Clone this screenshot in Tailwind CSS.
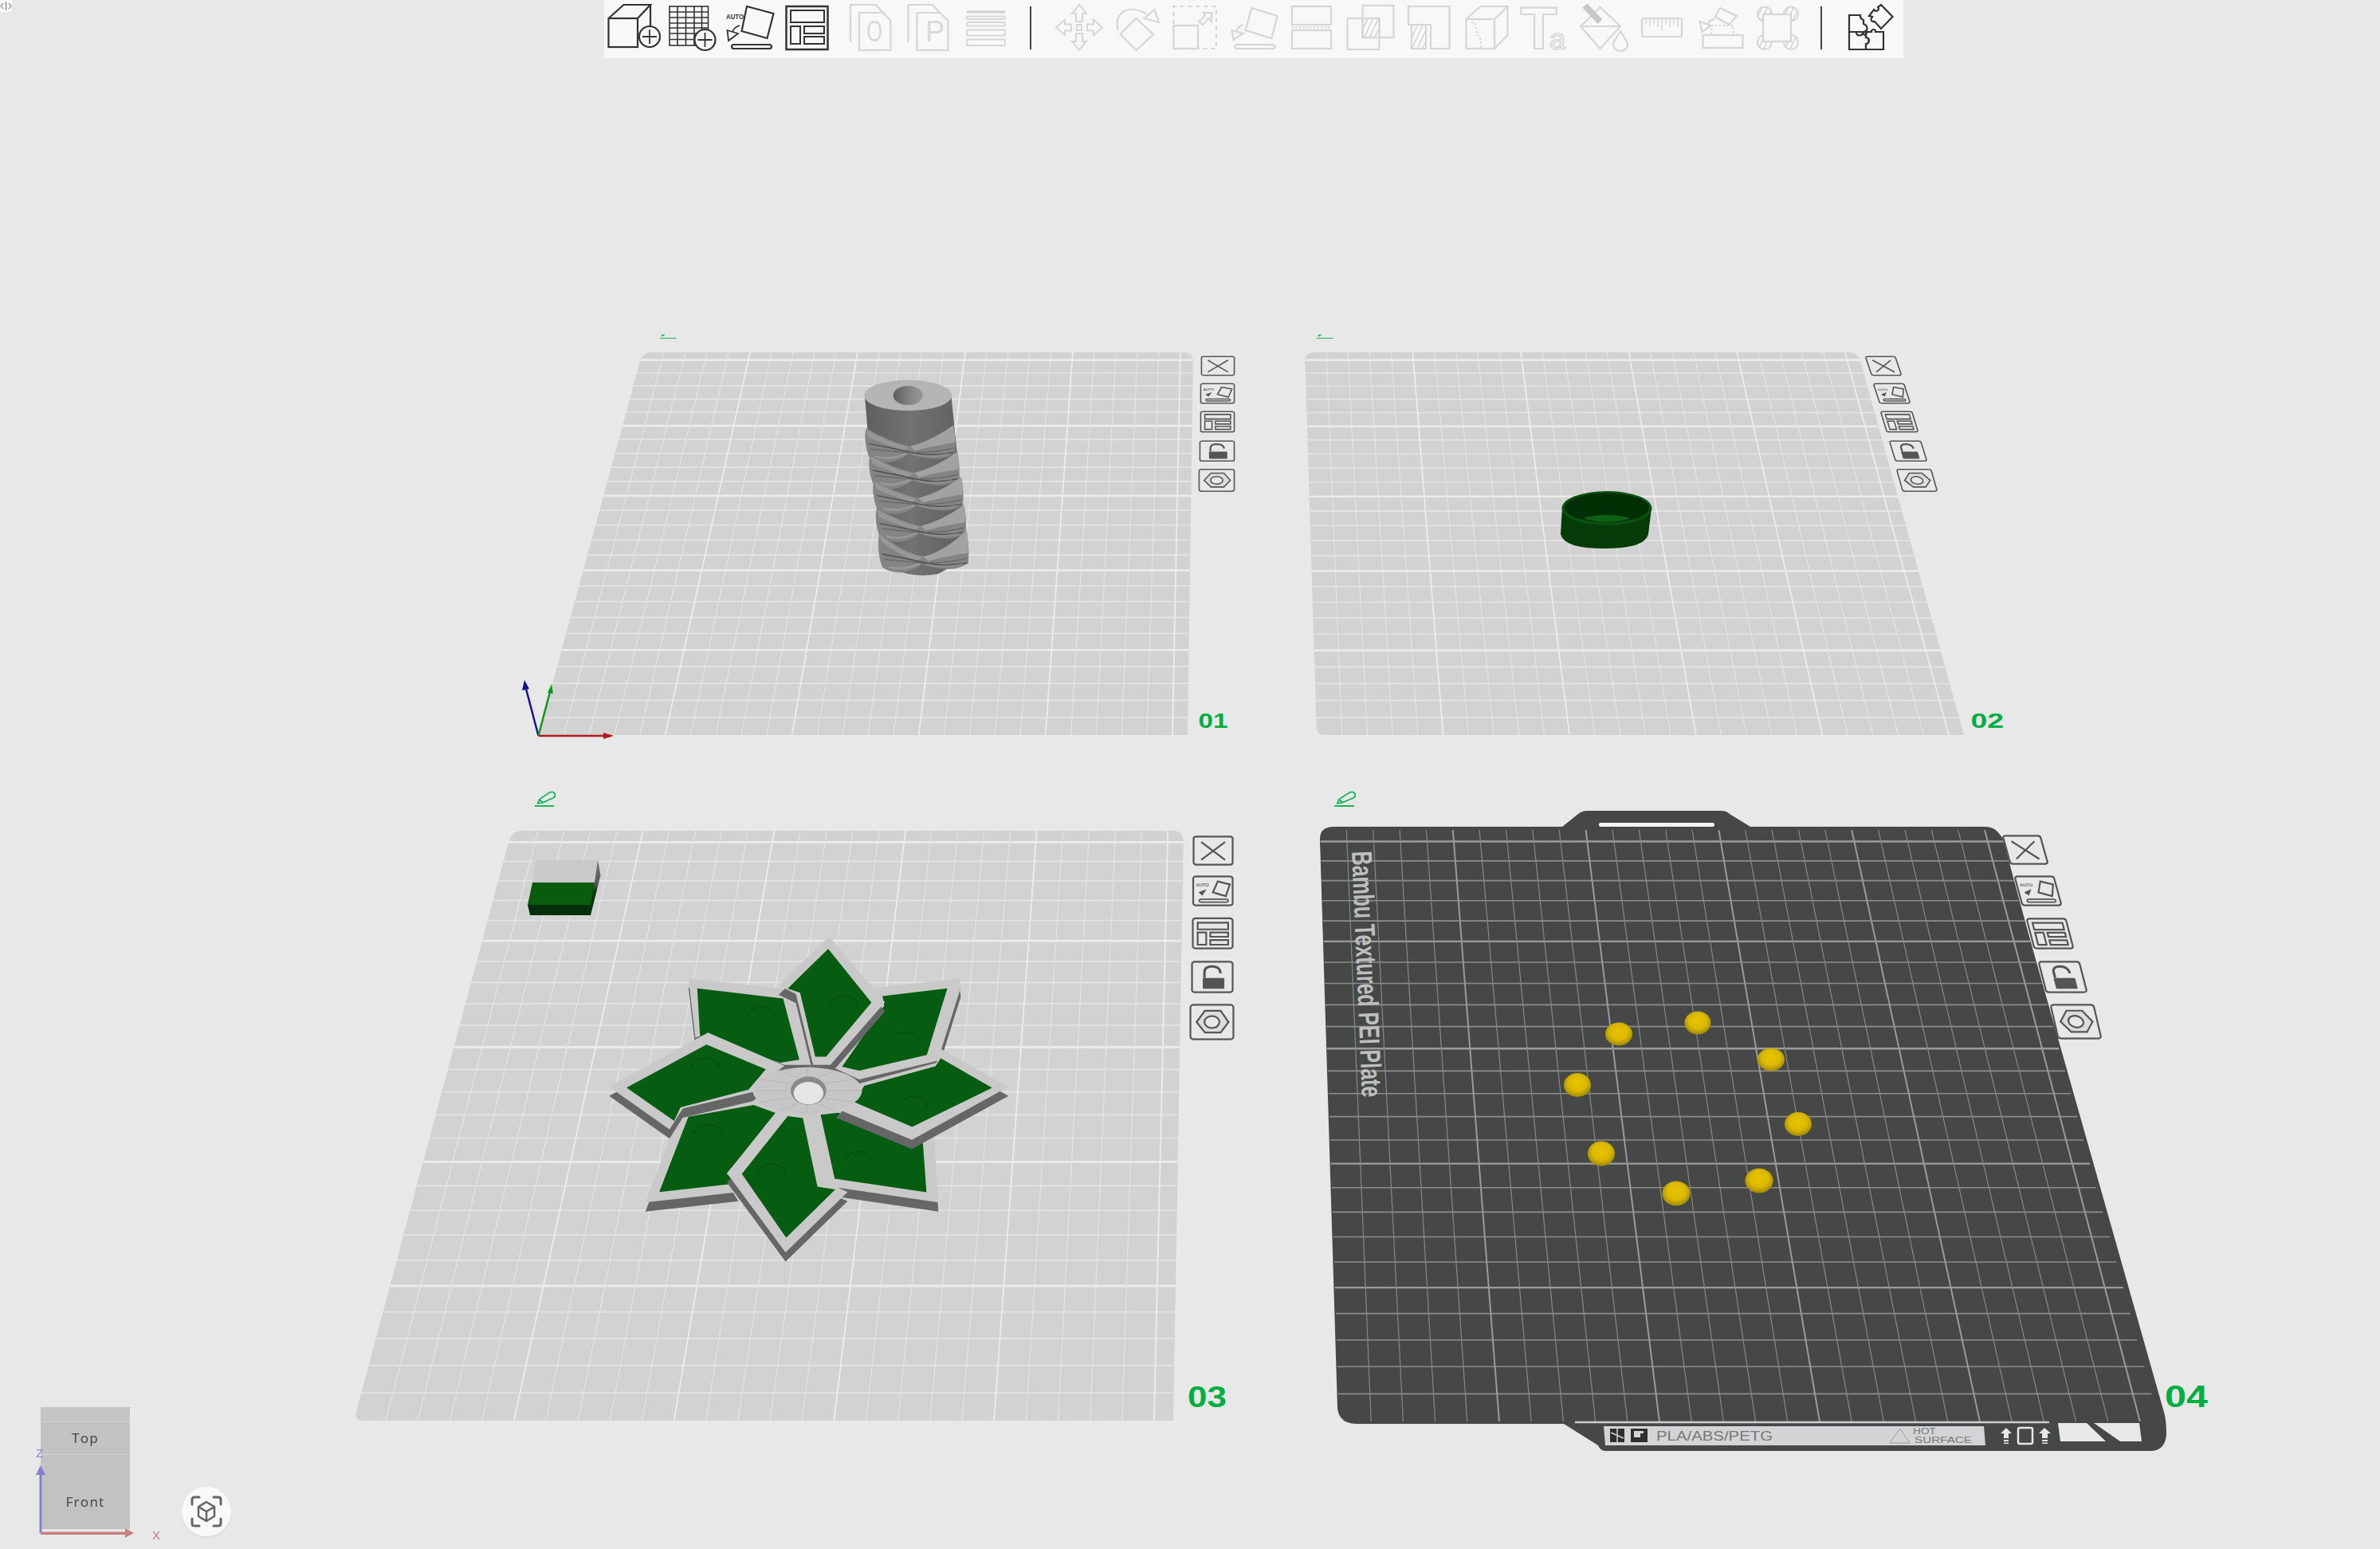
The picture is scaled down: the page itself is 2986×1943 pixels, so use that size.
<!doctype html>
<html lang="en">
<head>
<meta charset="utf-8">
<title>Plates</title>
<script src="https://cdn.jsdelivr.net/npm/@tailwindcss/browser@4"></script>
</head>
<body class="bg-[#e8e8e8] font-['Liberation_Sans',sans-serif]">
<div class="relative w-[2986px] h-[1943px] overflow-hidden bg-[#e8e8e8]">

  <!-- free 3D canvas -->
  <svg id="scene" class="absolute inset-0 w-[2986px] h-[1943px]" viewBox="0 0 2986 1943" xmlns="http://www.w3.org/2000/svg">
    <defs>
      <radialGradient id="bead" cx="50%" cy="42%" r="55%">
        <stop offset="0%" stop-color="#e6c400"/><stop offset="60%" stop-color="#dcb900"/><stop offset="100%" stop-color="#a88e00"/>
      </radialGradient>
      <linearGradient id="colBody" x1="0" x2="1" y1="0" y2="0">
        <stop offset="0%" stop-color="#5e5e5e"/><stop offset="45%" stop-color="#727272"/><stop offset="100%" stop-color="#5e5e5e"/>
      </linearGradient>
      <linearGradient id="holeGrad" x1="0" x2="1" y1="0" y2="0">
        <stop offset="0%" stop-color="#5f5f5f"/><stop offset="60%" stop-color="#868686"/><stop offset="100%" stop-color="#999999"/>
      </linearGradient>
      <linearGradient id="sideGrad" x1="0" x2="0" y1="0" y2="1">
        <stop offset="0%" stop-color="#777777"/><stop offset="45%" stop-color="#555555"/><stop offset="55%" stop-color="#053c08"/><stop offset="100%" stop-color="#032b05"/>
      </linearGradient>
      <pattern id="hatch" width="6" height="6" patternUnits="userSpaceOnUse" patternTransform="rotate(25)">
        <line x1="0" y1="0" x2="0" y2="6" stroke="#c4c4c4" stroke-width="2"/>
      </pattern>
    </defs>
    <g id="plates"></g>

    <!-- plate 4 label and details -->
    <text transform="translate(1696,1068) rotate(87.6)" textLength="309" lengthAdjust="spacingAndGlyphs" font-family="Liberation Sans" font-weight="700" font-size="36" fill="#bebebe">Bambu Textured PEI Plate</text>
    <g id="strip">
      <polygon points="2012,1789 2489,1789 2491,1813 2014,1813" fill="#d2d4d5"/>
      <rect x="2020" y="1792" width="18" height="17" fill="#2e2e2e"/>
      <path d="M2029 1792 V1809 M2021 1797 L2037 1804" stroke="#d2d4d5" stroke-width="1.5"/>
      <rect x="2046" y="1792" width="21" height="17" fill="#2e2e2e"/>
      <rect x="2050" y="1795" width="12" height="8" fill="#d2d4d5"/>
      <rect x="2058" y="1798" width="7" height="9" fill="#2e2e2e"/>
      <text x="2078" y="1807" textLength="146" lengthAdjust="spacingAndGlyphs" font-family="Liberation Sans" font-size="16" fill="#777777">PLA/ABS/PETG</text>
      <polygon points="2383.5,1792 2371,1810 2396,1810" fill="none" stroke="#9a9a9a" stroke-width="1"/>
      <text x="2400" y="1799" textLength="29" lengthAdjust="spacingAndGlyphs" font-family="Liberation Sans" font-size="10" fill="#777777">HOT</text>
      <text x="2402" y="1810" textLength="72" lengthAdjust="spacingAndGlyphs" font-family="Liberation Sans" font-size="10" fill="#777777">SURFACE</text>
      <path d="M2517 1791 L2524 1798 H2520 V1804 H2514 V1798 H2510 Z M2514 1806 H2520 V1808 H2514 Z M2514 1809.5 H2520 V1811 H2514 Z" fill="#e8e8e8"/>
      <rect x="2532" y="1791" width="18" height="20" rx="2" fill="none" stroke="#e8e8e8" stroke-width="2.5"/>
      <path d="M2565 1791 L2573 1798 H2569 V1804 H2562 V1798 H2558 Z M2562 1806 H2569 V1808 H2562 Z M2562 1809.5 H2569 V1811 H2562 Z" fill="#e8e8e8"/>
      <polygon points="2582,1785 2618,1785 2642,1808 2585,1808" fill="#e8e8e8"/>
      <polygon points="2627,1785 2684,1785 2687,1808 2660,1808" fill="#e8e8e8"/>
    </g>

    <!-- column on plate 1 -->
    <g id="column" transform="translate(1060,460) scale(0.3333)"></g>

    <!-- cup on plate 2 -->
    <g>
      <path d="M1960 637 L1958 670 Q1962 688 2013 688 Q2064 688 2068 670 L2072 637 Z" fill="#043b07"/>
      <ellipse cx="2016" cy="637.5" rx="56.5" ry="21.5" fill="#0a5010"/>
      <ellipse cx="2016" cy="637" rx="53" ry="18.5" fill="#032f05"/>
      <path d="M1986 650 Q2015 642 2046 650 Q2016 660 1986 650 Z" fill="#0b6213"/>
    </g>

    <!-- two-tone cube on plate 3 -->
    <g>
      <polygon points="750,1079 753.5,1098 741,1148 737,1107" fill="url(#sideGrad)"/>
      <polygon points="672,1079 750,1079 746,1107 668,1107" fill="#c9c9c9"/>
      <polygon points="668,1107 746,1107 741,1135 662,1135" fill="#0a5b0e"/>
      <polygon points="662,1135 741,1135 741,1148 665,1148" fill="#03300a"/>
    </g>

    <!-- star on plate 3 -->
    <g id="flower" transform="translate(440,980) scale(0.7207,0.523)"></g>

    <!-- pins on plate 4 -->
    <g fill="url(#bead)">
      <ellipse cx="2031" cy="1297" rx="17" ry="14.5"/>
      <ellipse cx="2130" cy="1283" rx="16.5" ry="14.5"/>
      <ellipse cx="2222" cy="1329" rx="17" ry="14.5"/>
      <ellipse cx="2256" cy="1410" rx="17" ry="15"/>
      <ellipse cx="2207" cy="1481" rx="17.5" ry="15.5"/>
      <ellipse cx="2103" cy="1497" rx="17.5" ry="15.5"/>
      <ellipse cx="2009" cy="1447" rx="17" ry="15.5"/>
      <ellipse cx="1979" cy="1361" rx="17" ry="15"/>
    </g>

    <!-- world axes -->
    <g stroke-width="2.5" fill="none">
      <line x1="675.5" y1="923" x2="660" y2="864" stroke="#14148c"/>
      <line x1="675.5" y1="923" x2="690" y2="868" stroke="#14961e"/>
      <line x1="675.5" y1="923" x2="760" y2="923" stroke="#b01a1a"/>
    </g>
    <polygon points="658,853 655,866 664,864" fill="#14148c"/>
    <polygon points="692,858 687,869 694,870" fill="#14961e"/>
    <polygon points="770,923 757,919 757,927" fill="#b01a1a"/>

    <!-- plate numbers -->
    <g font-family="Liberation Sans" font-weight="700" fill="#00ae42">
      <text x="1503.5" y="913" font-size="25" textLength="37" lengthAdjust="spacingAndGlyphs">01</text>
      <text x="2472.5" y="913" font-size="25" textLength="41.5" lengthAdjust="spacingAndGlyphs">02</text>
      <text x="1490" y="1765" font-size="37" textLength="49" lengthAdjust="spacingAndGlyphs">03</text>
      <text x="2716" y="1765" font-size="38" textLength="54" lengthAdjust="spacingAndGlyphs">04</text>
    </g>
    <g id="sides"></g>
    <g id="pencils"></g>
  </svg>

  <!-- top-left handle -->
  <div class="absolute left-0 top-0 w-[15px] h-[15px] bg-[#f8f8f8] flex items-center justify-center">
    <svg class="w-[15px] h-[15px]" viewBox="0 0 15 15"><path d="M4 4 L1 7.5 L4 11 M11 4 L14 7.5 L11 11" fill="none" stroke="#555" stroke-width="1"/><line x1="7.5" y1="2" x2="7.5" y2="13" stroke="#999" stroke-width="1.5"/></svg>
  </div>

  <!-- toolbar -->
  <div class="absolute left-[758px] top-0 w-[1630px] h-[73px] bg-[#f8f8f8] flex items-start pl-[2px]">
    <svg class="w-[72.5px] h-[73px] shrink-0" viewBox="0 0 72.5 73" fill="none" stroke="#333" stroke-width="2.2">
      <rect x="3.5" y="23" width="36.5" height="36"/><path d="M3.5 23 L22.5 6 H56 L40 23 M56 6 V34"/>
      <circle cx="55" cy="46" r="13" fill="#f8f8f8"/><path d="M55 37 V55 M46 46 H64" stroke-width="1.8"/>
    </svg>
    <svg class="w-[72.5px] h-[73px] shrink-0" viewBox="0 0 72.5 73" fill="none" stroke="#333" stroke-width="1.6">
      <rect x="7" y="8" width="48.5" height="49"/><path d="M17 8 V57 M27.5 8 V57 M38 8 V57 M47.5 8 V57 M7 15 H55.5 M7 22 H55.5 M7 29 H55.5 M7 35 H55.5 M7 42 H55.5 M7 49.5 H55.5"/>
      <circle cx="51.5" cy="50" r="13" fill="#f8f8f8" stroke-width="2.2"/><path d="M51.5 41 V59 M42.5 50 H60.5" stroke-width="1.8"/>
    </svg>
    <svg class="w-[72.5px] h-[73px] shrink-0" viewBox="0 0 72.5 73" fill="none" stroke="#333" stroke-width="2.2">
      <polygon points="32,8 65.5,17 57.5,48 25.5,39"/>
      <rect x="13" y="56" width="50" height="5" rx="2.5"/>
      <path d="M23 32 Q16 34 14 40" stroke-width="1.8"/>
      <polygon points="7.5,38 21,42 9,51" stroke-width="1.8"/>
      <text x="6" y="24" font-family="Liberation Sans" font-weight="700" font-size="9" fill="#333" stroke="none" textLength="22" lengthAdjust="spacingAndGlyphs">AUTO</text>
    </svg>
    <svg class="w-[72.5px] h-[73px] shrink-0" viewBox="0 0 72.5 73" fill="none" stroke="#333" stroke-width="2">
      <rect x="8.5" y="8" width="52" height="54" stroke-width="2.5"/><rect x="14" y="13" width="42" height="15"/><rect x="14" y="33" width="12" height="22"/><rect x="31" y="33" width="25" height="9"/><rect x="31" y="46" width="25" height="9"/>
    </svg>
    <svg class="w-[72.5px] h-[73px] shrink-0" viewBox="0 0 72.5 73" fill="none" stroke="#d6d6d6" stroke-width="2.2">
      <path d="M17 53 V6 H49 L58 16"/>
      <path d="M28 16 H58 L67.5 26 V63 H28 Z" fill="#f8f8f8"/>
      <text x="37" y="52" font-family="Liberation Sans" font-size="36" fill="#d9d9d9" stroke="none" textLength="20" lengthAdjust="spacingAndGlyphs">O</text>
    </svg>
    <svg class="w-[72.5px] h-[73px] shrink-0" viewBox="0 0 72.5 73" fill="none" stroke="#d6d6d6" stroke-width="2.2">
      <path d="M16.5 53 V6 H47 L56 16"/>
      <path d="M27.5 16 H56 L66.5 26 V63 H27.5 Z" fill="#f8f8f8"/>
      <text x="38" y="52" font-family="Liberation Sans" font-size="36" fill="#d9d9d9" stroke="none">P</text>
    </svg>
    <svg class="w-[72.5px] h-[73px] shrink-0" viewBox="0 0 72.5 73" fill="none" stroke="#d6d6d6" stroke-width="1.8">
      <rect x="18" y="13.5" width="48" height="3" fill="#d0d0d0" stroke="none"/><rect x="18" y="20.5" width="48" height="3.5" rx="1"/><rect x="18" y="28" width="48" height="4.5" rx="1"/><rect x="18" y="37.5" width="48" height="7" rx="1"/><rect x="18" y="49.5" width="48" height="7.5" rx="1"/>
    </svg>
    <div class="w-[50px] h-[73px] shrink-0 flex justify-center pt-[8px]"><div class="w-[2px] h-[54px] bg-[#444]"></div></div>

    <svg class="w-[72.5px] h-[73px] shrink-0" viewBox="0 0 72.5 73" fill="none" stroke="#d6d6d6" stroke-width="2">
      <path d="M36 6 L45 17 H40 V27 H32 V17 H27 Z"/><path d="M36 63 L45 52 H40 V42 H32 V52 H27 Z"/>
      <path d="M7 34.5 L18 25 V30.5 H26 V38.5 H18 V44 Z"/><path d="M65 34.5 L54 25 V30.5 H46 V38.5 H54 V44 Z"/><rect x="33" y="31" width="6" height="7"/>
    </svg>
    <svg class="w-[72.5px] h-[73px] shrink-0" viewBox="0 0 72.5 73" fill="none" stroke="#d6d6d6" stroke-width="2.2">
      <polygon points="35.5,23 57,43 35.5,63 15.5,43"/>
      <path d="M13 38 C6 18 24 4 48 17"/><polygon points="58.5,12 64,28 45.5,23"/>
    </svg>
    <svg class="w-[72.5px] h-[73px] shrink-0" viewBox="0 0 72.5 73" fill="none" stroke="#d6d6d6" stroke-width="2.2">
      <rect x="9.5" y="32" width="30.5" height="29"/><path d="M9.5 30 V8 H63 V61 H41" stroke-dasharray="5 5"/>
      <path d="M47 16 H57 V27 L53 23 L46 31 L41 27 L49 20 Z"/>
    </svg>
    <svg class="w-[72.5px] h-[73px] shrink-0" viewBox="0 0 72.5 73" fill="none" stroke="#d6d6d6" stroke-width="2.2">
      <polygon points="35.5,10 67.5,20 60.5,48 27.5,38"/><rect x="14.5" y="56" width="50" height="5" rx="2.5"/>
      <path d="M25 31 Q18 33 17 38"/><polygon points="10.5,38 24.5,42 12.5,50"/>
    </svg>
    <svg class="w-[72.5px] h-[73px] shrink-0" viewBox="0 0 72.5 73" fill="none" stroke="#d6d6d6" stroke-width="2.2">
      <rect x="13" y="8" width="49" height="23"/><rect x="13" y="38" width="49" height="23"/><path d="M13 34.5 H62" stroke-dasharray="2.5 2" stroke-width="2"/>
    </svg>
    <svg class="w-[72.5px] h-[73px] shrink-0" viewBox="0 0 72.5 73" fill="none" stroke="#d6d6d6" stroke-width="2.2">
      <rect x="29.5" y="23" width="21" height="24" fill="url(#hatch)"/><rect x="29.5" y="7" width="39" height="40"/><rect x="10.5" y="23" width="40" height="39"/>
    </svg>
    <svg class="w-[72.5px] h-[73px] shrink-0" viewBox="0 0 72.5 73" fill="none" stroke="#d6d6d6" stroke-width="2.2">
      <path d="M14 8 H65.5 V61 H42 V31 H14 Z"/><rect x="18" y="31" width="18" height="30" fill="url(#hatch)"/>
    </svg>
    <svg class="w-[72.5px] h-[73px] shrink-0" viewBox="0 0 72.5 73" fill="none" stroke="#d6d6d6" stroke-width="2.2">
      <rect x="14.5" y="24" width="35.5" height="37"/><path d="M14.5 24 L32.5 8 H66.5 V44 L50 61 M50 24 L66.5 8"/>
      <path d="M21 28 H25 L28 42 L33 50 V60" stroke-width="1.8" stroke-dasharray="2.5 2.5"/>
    </svg>
    <svg class="w-[72.5px] h-[73px] shrink-0" viewBox="0 0 72.5 73" fill="none" stroke="#d6d6d6" stroke-width="2.2">
      <text x="9.5" y="61" font-family="Liberation Sans" font-weight="700" font-size="74" textLength="46" lengthAdjust="spacingAndGlyphs" fill="#f8f8f8">T</text>
      <text x="46" y="62" font-family="Liberation Sans" font-size="36" textLength="20" lengthAdjust="spacingAndGlyphs" fill="#f8f8f8" stroke-width="1.6">a</text>
    </svg>
    <svg class="w-[72.5px] h-[73px] shrink-0" viewBox="0 0 72.5 73" fill="none" stroke="#d6d6d6" stroke-width="2.2">
      <polygon points="37.5,9 63,33 37.5,61 13,33"/><path d="M13 33 H63"/>
      <path d="M18.5 7 L37.5 27" stroke="#c6c6c6" stroke-width="8"/>
      <path d="M63 39 C58 48 54 52 54 56 A9 8 0 0 0 72 56 C72 52 68 48 63 39 Z" fill="#f8f8f8"/>
    </svg>
    <svg class="w-[72.5px] h-[73px] shrink-0" viewBox="0 0 72.5 73" fill="none" stroke="#d6d6d6" stroke-width="2.2">
      <rect x="17" y="23" width="50" height="23" rx="1.5"/><path d="M22 24 V31 M27 24 V34 M32 24 V31 M37 24 V34 M42 24 V38 M47 24 V31 M52 24 V34 M57 24 V31 M62 24 V34" stroke-width="1.5"/>
    </svg>
    <svg class="w-[72.5px] h-[73px] shrink-0" viewBox="0 0 72.5 73" fill="none" stroke="#d6d6d6" stroke-width="2.2">
      <rect x="21.5" y="44" width="50" height="16"/><path d="M32.5 43 V32 H59.5 V43" stroke-dasharray="2.5 2.5"/>
      <polygon points="43,10 63.5,20 54.5,31 36.5,21"/>
      <path d="M36 24 Q30 25 27 30"/><polygon points="17.5,27 31.5,32 20.5,40"/>
    </svg>
    <svg class="w-[72.5px] h-[73px] shrink-0" viewBox="0 0 72.5 73" fill="none" stroke="#d6d6d6" stroke-width="2">
      <circle cx="26" cy="17.5" r="9" fill="url(#hatch)"/><circle cx="59" cy="17.5" r="9" fill="url(#hatch)"/><circle cx="26" cy="53" r="9" fill="url(#hatch)"/><circle cx="59" cy="53" r="9" fill="url(#hatch)"/>
      <rect x="24" y="18" width="35" height="34" fill="#f8f8f8" stroke-width="2.2"/>
    </svg>
    <div class="w-[50px] h-[73px] shrink-0 flex justify-center pt-[8px]"><div class="w-[2px] h-[54px] bg-[#444]"></div></div>
    <svg class="w-[72.5px] h-[73px] shrink-0" viewBox="0 0 72.5 73" fill="none" stroke="#333" stroke-width="2.2">
      <path d="M10 19 H24 C23 24 28 25 28 24 V30 C34 32 34 39 28 40 C26 44 32 46 32 40 H10 Z"/>
      <path d="M10 40 H19 C18 46 28 46 27 40 H31 V47 C36 47 36 55 31 55 V62 H10 Z"/>
      <path d="M31 40 H38 C37 36 44 36 43 40 H53 V62 H31 V55 C36 55 36 47 31 47 Z"/>
      <path d="M50 6 L64.5 21 L50 36 L42 27 C37 28 36 22 40 21 L35 20 L41 12 C44 16 49 12 46 9 Z"/>
    </svg>
  </div>

  <!-- view cube -->
  <div class="absolute left-[51px] top-[1765px] w-[112px] h-[153px] bg-[#c2c2c2] flex flex-col text-[#444] font-['Open_Sans',sans-serif] text-[17px] tracking-[1.3px]">
    <div class="h-[19px] shrink-0 border-b border-[#d2d2d2] bg-[#c5c5c5]"></div>
    <div class="h-[41px] shrink-0 border-b border-[#cecece] flex items-center justify-center">Top</div>
    <div class="flex-1 flex items-center justify-center pt-[24px]">Front</div>
  </div>

  <!-- gizmo axes over view cube -->
  <svg class="absolute left-[40px] top-[1810px] w-[170px] h-[130px]" viewBox="40 1810 170 130">
    <rect x="49.5" y="1848" width="3" height="75" fill="#8383cc"/>
    <polygon points="51,1838 45,1850 57,1850" fill="#8383cc"/>
    <rect x="51" y="1921.5" width="106" height="3.5" fill="#cb8080"/>
    <polygon points="168,1923 157,1917 157,1929" fill="#cb8080"/>
    <text x="45" y="1828" font-family="Liberation Sans" font-size="15" fill="#8a8ad0">Z</text>
    <text x="191" y="1931" font-family="Liberation Sans" font-size="15" fill="#cc8080">X</text>
  </svg>

  <!-- fit button -->
  <div class="absolute left-[228px] top-[1865px] w-[62px] h-[62px] rounded-full bg-[#f9f9f9] shadow-[0_2px_3px_rgba(0,0,0,0.06)] flex items-center justify-center">
    <svg class="w-[40px] h-[40px]" viewBox="0 0 40 40" fill="none" stroke="#666" stroke-width="3" stroke-linecap="round" stroke-linejoin="round">
      <path d="M2 11 V5 Q2 2 5 2 H11 M29 2 H35 Q38 2 38 5 V11 M38 29 V35 Q38 38 35 38 H29 M11 38 H5 Q2 38 2 35 V29"/>
      <path d="M20 8 L30 14 V26 L20 32 L10 26 V14 Z M10 14 L20 20 L30 14 M20 20 V32" stroke-width="2.5"/>
    </svg>
  </div>
</div>

<script>
function homography(q){
  const [x0,y0]=q[0],[x1,y1]=q[1],[x2,y2]=q[2],[x3,y3]=q[3];
  const dx1=x1-x2,dx2=x3-x2,sx=x0-x1+x2-x3,dy1=y1-y2,dy2=y3-y2,sy=y0-y1+y2-y3;
  const den=dx1*dy2-dx2*dy1,g=(sx*dy2-dx2*sy)/den,h=(dx1*sy-sx*dy1)/den;
  const a=x1-x0+g*x1,b=x3-x0+h*x3,d=y1-y0+g*y1,e=y3-y0+h*y3;
  return (u,v)=>{const w=g*u+h*v+1;return [(a*u+b*v+x0)/w,(d*u+e*v+y0)/w];};
}
function roundedQuad(q,rs){
  let out='';
  for(let i=0;i<4;i++){
    const p=q[i],a=q[(i+3)%4],b=q[(i+1)%4],r=rs[i];
    const la=Math.hypot(a[0]-p[0],a[1]-p[1]),lb=Math.hypot(b[0]-p[0],b[1]-p[1]);
    const s=[p[0]+(a[0]-p[0])*r/la,p[1]+(a[1]-p[1])*r/la],t=[p[0]+(b[0]-p[0])*r/lb,p[1]+(b[1]-p[1])*r/lb];
    out+=(i?'L':'M')+s[0].toFixed(1)+' '+s[1].toFixed(1)+' Q'+p[0]+' '+p[1]+' '+t[0].toFixed(1)+' '+t[1].toFixed(1)+' ';
  }
  return out+'Z';
}
function grid(id,q,fill,h1,h2,v1,v2,w,rs){
  const H=homography(q);let s='';
  const path=roundedQuad(q,rs);
  s+='<clipPath id="clip'+id+'"><path d="'+path+'"/></clipPath>';
  s+='<path d="'+path+'" fill="'+fill+'"/><g clip-path="url(#clip'+id+')" fill="none">';
  for(let k=1;k<=25;k++){
    const bold=k%5===0;
    const a=H(0,1-k*10/256),b=H(1,1-k*10/256);
    s+='<line x1="'+a[0]+'" y1="'+a[1]+'" x2="'+b[0]+'" y2="'+b[1]+'" stroke="'+(bold?h2:h1)+'" stroke-width="'+(bold?w[1]:w[0])+'"/>';
  }
  for(let k=1;k<=25;k++){
    const bold=k%5===0;
    const a=H(k*10/256,0),b=H(k*10/256,1);
    s+='<line x1="'+a[0]+'" y1="'+a[1]+'" x2="'+b[0]+'" y2="'+b[1]+'" stroke="'+(bold?v2:v1)+'" stroke-width="'+(bold?w[3]:w[2])+'"/>';
  }
  s+='</g>';
  return s;
}
const body4='<path d="M1656 1052 Q1656 1037 1674 1037 H1960 L1980 1021 Q1985 1017 1992 1017 H2160 Q2166 1017 2170 1021 L2196 1037 H2490 Q2506 1037 2511 1052 L2716 1775 Q2718 1785 2718 1800 Q2716 1820 2698 1820 H2014 Q2008 1820 2005 1813 L1962 1786 H1702 Q1680 1786 1678 1766 Z" fill="#464847"/>'+
 '<rect x="2006" y="1032" width="145" height="5" rx="2" fill="#f2f2f2"/>';
let plates='';
const lw=[1.8,2.6,1.2,1.8];
plates+=grid(1,[[806,442],[1497,442],[1490,922],[675.5,922]],'#d2d2d2','#e2e2e2','#ebebeb','#e4e4e4','#ececec',lw,[12,12,0,6]);
plates+=grid(2,[[1637,442],[2331,442],[2464,922],[1652,922]],'#d2d2d2','#e2e2e2','#ebebeb','#e4e4e4','#ececec',lw,[12,12,0,10]);
plates+=grid(3,[[642,1042],[1485,1042],[1472,1782],[444,1782]],'#d2d2d2','#e2e2e2','#ebebeb','#e4e4e4','#ececec',[1.8,2.8,1.2,1.8],[14,14,0,12]);
plates+=body4+grid(4,[[1656,1041],[2510,1041],[2709,1783],[1680,1783]],'#464847','#8c8c8c','#9c9c9c','#888888','#9a9a9a',[1.6,2.4,1.2,2],[16,16,0,18]);
plates+='<line x1="1976" y1="1784" x2="2571" y2="1784" stroke="#cfcfcf" stroke-width="2.5"/>';
document.getElementById('plates').innerHTML=plates;

/* column */
let col='';
col+='<path d="M75 110 L85 230 L145 740 Q235 800 350 780 L462 720 L400 105 Z" fill="url(#colBody)"/>';
const cross=[[240,320],[255,420],[270,515],[280,620],[290,735]];
cross.forEach(([x,y],i)=>{
  const scale=i===4?1.05:.85;
  const L=x-160,R=x+168,T=y-105*scale;
  /* silhouette of the crossing bands */
  col+='<path d="M'+L+' '+T+' Q'+(x-80)+' '+(y-42)+' '+(x+5)+' '+(y-20)+' Q'+(x+90)+' '+(y-42)+' '+R+' '+(T-12)+' Q'+(x+180)+' '+(y-50)+' '+(x+174)+' '+(y+6)+' Q'+(x+130)+' '+(y+30)+' '+(x+90)+' '+(y+26)+' Q'+(x+40)+' '+(y+22)+' '+x+' '+(y+8)+' Q'+(x-40)+' '+(y+38)+' '+(x-80)+' '+(y+40)+' Q'+(x-130)+' '+(y+38)+' '+(x-150)+' '+(y+18)+' Q'+(x-172)+' '+(y-45)+' '+L+' '+T+' Z" fill="#848484"/>';
  /* lit upper V */
  col+='<path d="M'+(x+6)+' '+(y-20)+' Q'+(x+90)+' '+(y-42)+' '+R+' '+(T-10)+' Q'+(x+178)+' '+(y-60)+' '+(x+172)+' '+(y-34)+' Q'+(x+90)+' '+(y-22)+' '+(x+25)+' '+(y-4)+' Z" fill="#a2a2a2"/>';
  col+='<path d="M'+(L+2)+' '+(T+6)+' Q'+(x-80)+' '+(y-36)+' '+(x+4)+' '+(y-18)+' L'+(x-18)+' '+(y-6)+' Q'+(x-90)+' '+(y-26)+' '+(L+8)+' '+(T+34)+' Z" fill="#979797"/>';
  /* folds running through the crossing */
  col+='<path d="M'+(x-150)+' '+(y-30)+' Q'+(x-70)+' '+(y-16)+' '+x+' '+y+' Q'+(x+90)+' '+(y+22)+' '+(x+170)+' '+(y+2)+'" fill="none" stroke="#4e4e4e" stroke-width="4"/>';
  col+='<path d="M'+(x-142)+' '+(y-10)+' Q'+(x-60)+' '+(y-2)+' '+(x+5)+' '+(y+4)+' M'+(x+30)+' '+(y+2)+' Q'+(x+100)+' '+(y+4)+' '+(x+168)+' '+(y-14)+'" fill="none" stroke="#5e5e5e" stroke-width="3"/>';
  /* lower lobes */
  col+='<path d="M'+(x-125)+' '+(y+18)+' Q'+(x-70)+' '+(y+34)+' '+(x-8)+' '+(y+6)+'" fill="none" stroke="#989898" stroke-width="8"/>';
  col+='<path d="M'+(x+18)+' '+(y+10)+' Q'+(x+80)+' '+(y+24)+' '+(x+150)+' '+(y+10)+'" fill="none" stroke="#8f8f8f" stroke-width="6"/>';
});
col+='<ellipse cx="238" cy="108" rx="165" ry="58" fill="#b5b5b5"/>';
col+='<ellipse cx="238" cy="108" rx="56" ry="36" fill="url(#holeGrad)"/>';
document.getElementById('column').innerHTML=col;

/* flower */
const petals=[
 {o:[[915,495],[1060,473],[1062,495],[1022,670],[885,715],[830,680]],g:[[925,510],[1045,490],[1007,660],[882,700],[850,690],[928,535]],m:[965,625]},
 {o:[[588,473],[770,500],[805,680],[755,680],[622,603],[600,615]],g:[[598,490],[757,516],[787,672],[752,680],[622,622],[603,610]],m:[715,565]},
 {o:[[795,795],[840,780],[975,860],[1015,840],[1023,1010],[825,970]],g:[[812,795],[845,790],[975,868],[1000,840],[1008,993],[838,958]],m:[883,912]},
 {o:[[575,785],[710,750],[765,790],[655,940],[675,985],[513,1010]],g:[[584,800],[705,770],[745,790],[655,945],[672,970],[530,992]],m:[622,848]},
 {o:[[833,372],[930,530],[835,680],[805,680],[775,510],[745,490]],g:[[832,393],[912,530],[828,668],[808,668],[780,505],[757,494]],m:[858,538]},
 {o:[[1025,640],[1145,733],[977,860],[845,785],[885,725],[1020,675]],g:[[1030,660],[1125,735],[977,835],[870,772],[888,730],[1020,680]],m:[980,780]},
 {o:[[655,940],[750,790],[795,795],[825,960],[865,985],[757,1130]],g:[[675,942],[760,795],[788,800],[815,975],[848,982],[757,1105]],m:[733,942]},
 {o:[[450,733],[622,603],[755,682],[700,745],[578,785],[555,835]],g:[[472,735],[620,625],[730,688],[698,740],[572,785],[560,820]],m:[617,688]}
];
const pts=a=>a.map(p=>p.join(',')).join(' ');
function inset(a,f){
  const cx=a.reduce((s,p)=>s+p[0],0)/a.length,cy=a.reduce((s,p)=>s+p[1],0)/a.length;
  return a.map(([x,y])=>[cx+(x-cx)*f,cy+(y-cy)*f]);
}
let fl='';
petals.forEach(p=>{
  const w=p.o.map(([x,y])=>[x,y+22]);
  fl+='<polygon points="'+pts(w)+'" fill="#666666"/>';
  fl+='<polygon points="'+pts(p.o)+'" fill="#c9c9c9"/>';
  fl+='<polygon points="'+pts(inset(p.g,.94))+'" fill="#065c10"/>';
  fl+='<path d="M'+(p.m[0]-24)+' '+p.m[1]+' A24 24 0 0 1 '+(p.m[0]+24)+' '+p.m[1]+'" fill="none" stroke="#044208" stroke-width="1.2"/>';
});
fl+='<ellipse cx="795" cy="742" rx="95" ry="56" fill="#c6c6c6"/>';
for(let i=0;i<12;i++){const a=i*Math.PI/6;fl+='<line x1="'+(795+35*Math.cos(a))+'" y1="'+(742+36*Math.sin(a))+'" x2="'+(795+93*Math.cos(a))+'" y2="'+(742+54*Math.sin(a))+'" stroke="#adadad" stroke-width="1"/>';}
fl+='<ellipse cx="797" cy="742" rx="31" ry="34" fill="#8a8a8a"/><ellipse cx="797" cy="748" rx="26" ry="27" fill="#e6e6e6"/>';
document.getElementById('flower').innerHTML=fl;

/* panel icons */
const ve='vector-effect="non-scaling-stroke"';
const shapes={
 x:sw=>'<line x1="20" y1="20" x2="80" y2="82" '+ve+' stroke="#555" stroke-width="'+sw+'"/><line x1="80" y1="20" x2="20" y2="82" '+ve+' stroke="#555" stroke-width="'+sw+'"/>',
 auto:sw=>'<polygon points="62,18 92,28 82,68 50,55" fill="none" '+ve+' stroke="#555" stroke-width="'+sw+'"/><rect x="16" y="78" width="72" height="10" rx="5" fill="none" '+ve+' stroke="#555" stroke-width="'+(sw*.8)+'"/><text x="8" y="36" font-family="Liberation Sans" font-weight="700" font-size="15" textLength="32" lengthAdjust="spacingAndGlyphs" fill="#666">AUTO</text><polygon points="14,55 34,44 24,66" fill="#555"/>',
 arr:sw=>'<g fill="none" stroke="#555" stroke-width="'+sw+'"><rect x="13" y="15" width="75" height="22" '+ve+'/><rect x="13" y="47" width="21" height="40" '+ve+'/><rect x="44" y="47" width="44" height="14" '+ve+'/><rect x="44" y="72" width="44" height="15" '+ve+'/></g>',
 lock:sw=>'<rect x="27" y="53" width="52" height="35" rx="3" fill="#555"/><path d="M31 53 V35 Q31 16 50 16 Q68 16 70 38" fill="none" '+ve+' stroke="#555" stroke-width="'+(sw*1.4)+'"/>',
 nut:sw=>'<polygon points="15,50 34,18 70,18 88,50 70,80 34,80" fill="#dcdcdc" '+ve+' stroke="#555" stroke-width="'+sw+'"/><ellipse cx="50" cy="50" rx="17" ry="17" fill="#e8e8e8" '+ve+' stroke="#555" stroke-width="'+sw+'"/>'
};
const order=['x','auto','arr','lock','nut'];
function panel(rows,sw,shear){
  let s='';
  rows.forEach((r,i)=>{
    const [x0,x1,y0,y1]=r,sx=(x1-x0-shear)/100,sy=(y1-y0)/100;
    s+='<g transform="matrix('+sx+',0,'+(shear/100)+','+sy+','+x0+','+y0+')"><rect x="1" y="1" width="98" height="98" rx="7" fill="#e8e8e8" '+ve+' stroke="#555" stroke-width="'+sw+'"/>'+shapes[order[i]](sw)+'</g>';
  });
  return s;
}
let sd='';
sd+=panel([[1507,1549,447,471],[1506,1549,481,506],[1506,1549,516,542],[1505,1549,553,578.5],[1504,1549,588.5,616.5]],1.6,0);
sd+=panel([[2340,2386,447,471],[2350,2397,481,506],[2359,2407,516,542],[2370,2418,553,578.5],[2379,2431,588.5,616.5]],1.6,8);
sd+=panel([[1497,1547,1049,1085],[1496.5,1547,1099,1136],[1496,1547,1151.5,1190],[1495,1547,1206,1245],[1493,1548,1260,1304]],2.2,0);
sd+=panel([[2512,2570,1048,1084],[2527,2587,1099,1136],[2542,2602,1152,1190],[2557,2619,1206,1245],[2572,2637,1260,1303]],2.2,10);
document.getElementById('sides').innerHTML=sd;

/* pencils */
function pencil(x,y,w,h,cut){
  const sx=w/30,sy=h/20;
  let s='<g transform="matrix('+sx+',0,0,'+sy+','+x+','+y+')">';
  s+='<line x1="1" y1="18.5" x2="27" y2="18.5" stroke="#19b35a" stroke-width="2"/>';
  if(cut) s+='<polygon points="4,15 10,9 6,9 3,11" fill="#19b35a"/>';
  else s+='<path d="M5 15 L7 10 L21 1 Q26 -1 28 3 Q29 6 26 8 L12 14 Z M7 10 L12 14" fill="none" stroke="#19b35a" stroke-width="1.8"/>';
  return s+'</g>';
}
document.getElementById('pencils').innerHTML=
 pencil(827,415,24,10,true)+pencil(1651,415,24,10,true)+pencil(670,993,28,19.5,false)+pencil(1673,993,29,19.5,false);
</script>
</body>
</html>
